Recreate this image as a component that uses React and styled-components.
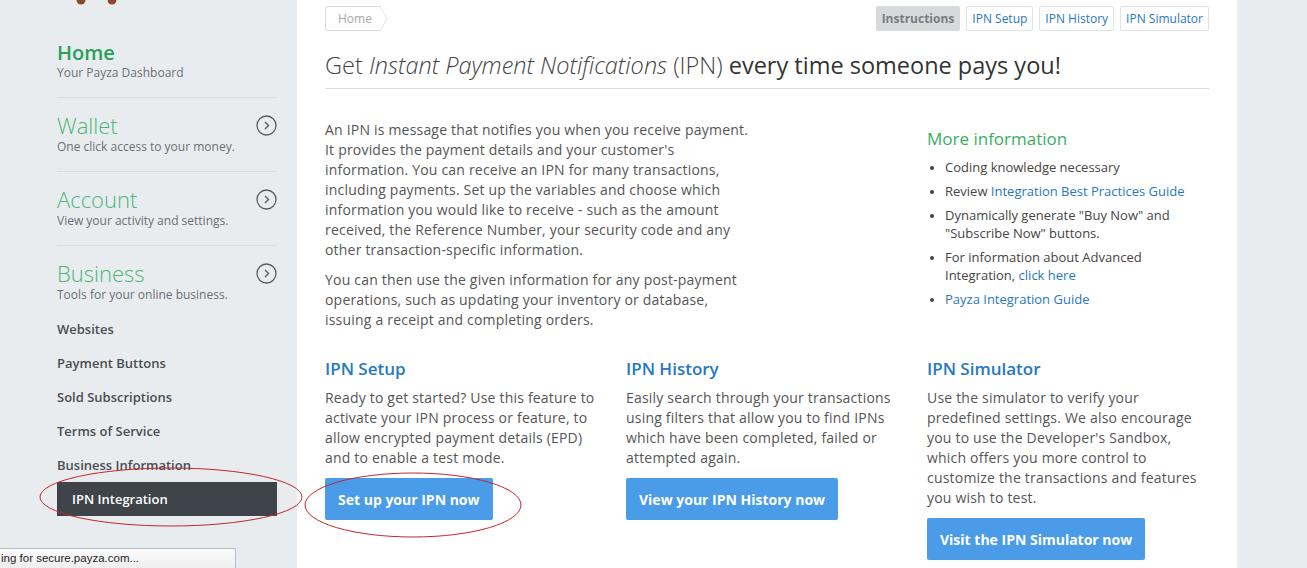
import React from 'react';
import styled, { createGlobalStyle } from 'styled-components';

const GlobalStyle = createGlobalStyle`
  body {
    margin: 0;
    background: #e9ecef;
    font-family: "Open Sans", "Noto Sans", Arial, sans-serif;
    color: #555;
  }
`;

const Page = styled.div`
  position: relative;
  display: flex;
  width: 1307px;
  height: 568px;
  overflow: hidden;
`;

const Sidebar = styled.aside`
  width: 297px;
  flex-shrink: 0;
  box-sizing: border-box;
  padding: 0 20px 0 57px;
`;

const Logo = styled.div`
  height: 40px;
  svg {
    display: block;
  }
`;

const NavBlock = styled.div`
  padding: ${(p) => (p.first ? '0 0 16px' : '14px 0 16px')};
  border-bottom: ${(p) => (p.last ? 'none' : '1px solid #d9dde1')};
  display: flex;
  justify-content: space-between;
  align-items: flex-start;
`;

const NavTitle = styled.div`
  color: ${(p) => (p.active ? '#27a05a' : '#4db577')};
  font-size: ${(p) => (p.active ? '20px' : '22px')};
  font-weight: ${(p) => (p.active ? 600 : 300)};
  line-height: ${(p) => (p.active ? '25px' : '27px')};
`;

const NavSub = styled.div`
  font-size: 12px;
  line-height: 16px;
  color: #6b6f73;
`;

const Arrow = styled.svg`
  margin-top: 3px;
`;

const SubList = styled.ul`
  list-style: none;
  margin: -7px 0 0;
  padding: 0;
`;

const SubItem = styled.li`
  height: 34px;
  line-height: 34px;
  font-size: 13px;
  font-weight: 600;
  color: ${(p) => (p.current ? '#fff' : '#4a4e52')};
  background: ${(p) => (p.current ? '#3e4449' : 'transparent')};
  padding-left: ${(p) => (p.current ? '15px' : '0')};
`;

const Main = styled.main`
  width: 940px;
  flex-shrink: 0;
  box-sizing: border-box;
  background: #fff;
  padding: 6px 28px 0;
`;

const TopBar = styled.div`
  display: flex;
  justify-content: space-between;
  height: 25px;
`;

const Crumb = styled.div`
  position: relative;
  box-sizing: border-box;
  width: 56px;
  height: 25px;
  line-height: 23px;
  padding-left: 12px;
  font-size: 12px;
  color: #a8a8a8;
  border: 1px solid #dedede;
  border-right: none;
  border-radius: 3px 0 0 3px;
  &::after {
    content: '';
    position: absolute;
    right: -8px;
    top: 3px;
    width: 16px;
    height: 16px;
    border-top: 1px solid #dedede;
    border-right: 1px solid #dedede;
    background: #fff;
    transform: scaleX(0.6) rotate(45deg);
  }
`;

const Tabs = styled.div`
  display: flex;
  gap: 6px;
`;

const Tab = styled.div`
  box-sizing: border-box;
  height: 25px;
  line-height: 23px;
  padding: 0 5px;
  font-size: 12px;
  border-radius: 2px;
  border: 1px solid ${(p) => (p.active ? '#d7d9db' : '#dfe3e6')};
  background: ${(p) => (p.active ? '#d7d9db' : '#fff')};
  color: ${(p) => (p.active ? '#7a7d80' : '#2a78bd')};
  font-weight: ${(p) => (p.active ? 700 : 400)};
`;

const Heading = styled.h1`
  margin: 18px 0 0;
  padding-bottom: 7px;
  border-bottom: 1px solid #dcdcdc;
  font-size: 23.5px;
  line-height: 32px;
  font-weight: 300;
  color: #444;
  em {
    font-style: italic;
  }
  strong {
    font-weight: 400;
    color: #333;
  }
`;

const Grid = styled.div`
  display: grid;
  grid-template-columns: repeat(3, 281px);
  column-gap: 20px;
  margin-top: 31px;
`;

const Intro = styled.div`
  grid-column: 1 / 3;
  width: 430px;
`;

const Para = styled.p`
  margin: 0 0 10px;
  font-size: 14px;
  line-height: 20px;
  letter-spacing: 0.2px;
  color: #555;
`;

const InfoBox = styled.div`
  padding-top: 7px;
`;

const InfoTitle = styled.h3`
  margin: 0 0 7px;
  font-size: 17px;
  line-height: 24px;
  font-weight: 400;
  color: #3aae63;
`;

const InfoList = styled.ul`
  margin: 0;
  padding: 0 0 0 18px;
  font-size: 13px;
  line-height: 18px;
  color: #444;
  li {
    margin-bottom: 6px;
  }
  li::marker {
    font-size: 11px;
  }
`;

const Link = styled.a`
  color: #2a78bd;
  text-decoration: none;
`;

const Section = styled.div`
  margin-top: 18px;
`;

const SectionTitle = styled.h2`
  margin: 0 0 8px;
  font-size: 17px;
  line-height: 22px;
  font-weight: 600;
  color: #2678c0;
`;

const Button = styled.button`
  height: 42px;
  padding: 0 13px;
  border: none;
  border-radius: 2px;
  background: #4a9ce8;
  color: #fff;
  font-family: inherit;
  font-size: 14px;
  font-weight: 700;
  cursor: pointer;
`;

const Annotations = styled.svg`
  position: absolute;
  left: 0;
  top: 0;
  pointer-events: none;
`;

const StatusBar = styled.div`
  position: absolute;
  left: 0;
  bottom: 0;
  box-sizing: border-box;
  width: 236px;
  height: 20px;
  line-height: 18px;
  padding-left: 1px;
  font-family: "Liberation Sans", Arial, sans-serif;
  font-size: 11.5px;
  color: #1e1e1e;
  background: linear-gradient(#fbfbfb, #eeeeee);
  border: 1px solid #b9bcc0;
  border-left: none;
  border-bottom: none;
  white-space: nowrap;
  overflow: hidden;
`;

const ChevronCircle = () => (
  <Arrow width="21" height="21" viewBox="0 0 21 21">
    <circle cx="10.5" cy="10.5" r="9.5" fill="none" stroke="#5a5e62" strokeWidth="1.3" />
    <path d="M9 7 L12.5 10.5 L9 14" fill="none" stroke="#5a5e62" strokeWidth="1.4" />
  </Arrow>
);

const navItems = [
  { title: 'Wallet', sub: 'One click access to your money.' },
  { title: 'Account', sub: 'View your activity and settings.' },
  { title: 'Business', sub: 'Tools for your online business.' },
];

const businessLinks = ['Websites', 'Payment Buttons', 'Sold Subscriptions', 'Terms of Service', 'Business Information'];

const App = () => (
  <Page>
    <GlobalStyle />
    <Sidebar>
      <Logo>
        <svg width="80" height="8" viewBox="0 0 80 8">
          <circle cx="24" cy="0" r="4.5" fill="#8a4a26" />
          <circle cx="55" cy="0" r="4.5" fill="#8a4a26" />
        </svg>
      </Logo>
      <NavBlock first>
        <div>
          <NavTitle active>Home</NavTitle>
          <NavSub>Your Payza Dashboard</NavSub>
        </div>
      </NavBlock>
      {navItems.map((item, i) => (
        <NavBlock key={item.title} last={i === navItems.length - 1}>
          <div>
            <NavTitle>{item.title}</NavTitle>
            <NavSub>{item.sub}</NavSub>
          </div>
          <ChevronCircle />
        </NavBlock>
      ))}
      <SubList>
        {businessLinks.map((l) => (
          <SubItem key={l}>{l}</SubItem>
        ))}
        <SubItem current>IPN Integration</SubItem>
      </SubList>
    </Sidebar>

    <Main>
      <TopBar>
        <Crumb>Home</Crumb>
        <Tabs>
          <Tab active>Instructions</Tab>
          <Tab>IPN Setup</Tab>
          <Tab>IPN History</Tab>
          <Tab>IPN Simulator</Tab>
        </Tabs>
      </TopBar>
      <Heading>
        Get <em>Instant Payment Notifications</em> (IPN) <strong>every time someone pays you!</strong>
      </Heading>

      <Grid>
        <Intro>
          <Para>
            An IPN is message that notifies you when you receive payment. It provides the payment details and your
            customer's information. You can receive an IPN for many transactions, including payments. Set up the
            variables and choose which information you would like to receive - such as the amount received, the
            Reference Number, your security code and any other transaction-specific information.
          </Para>
          <Para>
            You can then use the given information for any post-payment operations, such as updating your inventory
            or database, issuing a receipt and completing orders.
          </Para>
        </Intro>
        <InfoBox>
          <InfoTitle>More information</InfoTitle>
          <InfoList>
            <li>Coding knowledge necessary</li>
            <li>
              Review <Link>Integration Best Practices Guide</Link>
            </li>
            <li>Dynamically generate "Buy Now" and "Subscribe Now" buttons.</li>
            <li>
              For information about Advanced Integration, <Link>click here</Link>
            </li>
            <li>
              <Link>Payza Integration Guide</Link>
            </li>
          </InfoList>
        </InfoBox>

        <Section>
          <SectionTitle>IPN Setup</SectionTitle>
          <Para>
            Ready to get started? Use this feature to activate your IPN process or feature, to allow encrypted payment
            details (EPD) and to enable a test mode.
          </Para>
          <Button>Set up your IPN now</Button>
        </Section>
        <Section>
          <SectionTitle>IPN History</SectionTitle>
          <Para>
            Easily search through your transactions using filters that allow you to find IPNs which have been
            completed, failed or attempted again.
          </Para>
          <Button>View your IPN History now</Button>
        </Section>
        <Section>
          <SectionTitle>IPN Simulator</SectionTitle>
          <Para>
            Use the simulator to verify your predefined settings. We also encourage you to use the Developer's
            Sandbox, which offers you more control to customize the transactions and features you wish to test.
          </Para>
          <Button>Visit the IPN Simulator now</Button>
        </Section>
      </Grid>
    </Main>

    <Annotations width="1307" height="568" viewBox="0 0 1307 568">
      <ellipse cx="171" cy="497" rx="131" ry="29" fill="none" stroke="#c0282d" strokeWidth="1" />
      <ellipse cx="413" cy="505" rx="108" ry="32" fill="none" stroke="#c0282d" strokeWidth="1" />
    </Annotations>
    <StatusBar>ing for secure.payza.com...</StatusBar>
  </Page>
);

export default App;
